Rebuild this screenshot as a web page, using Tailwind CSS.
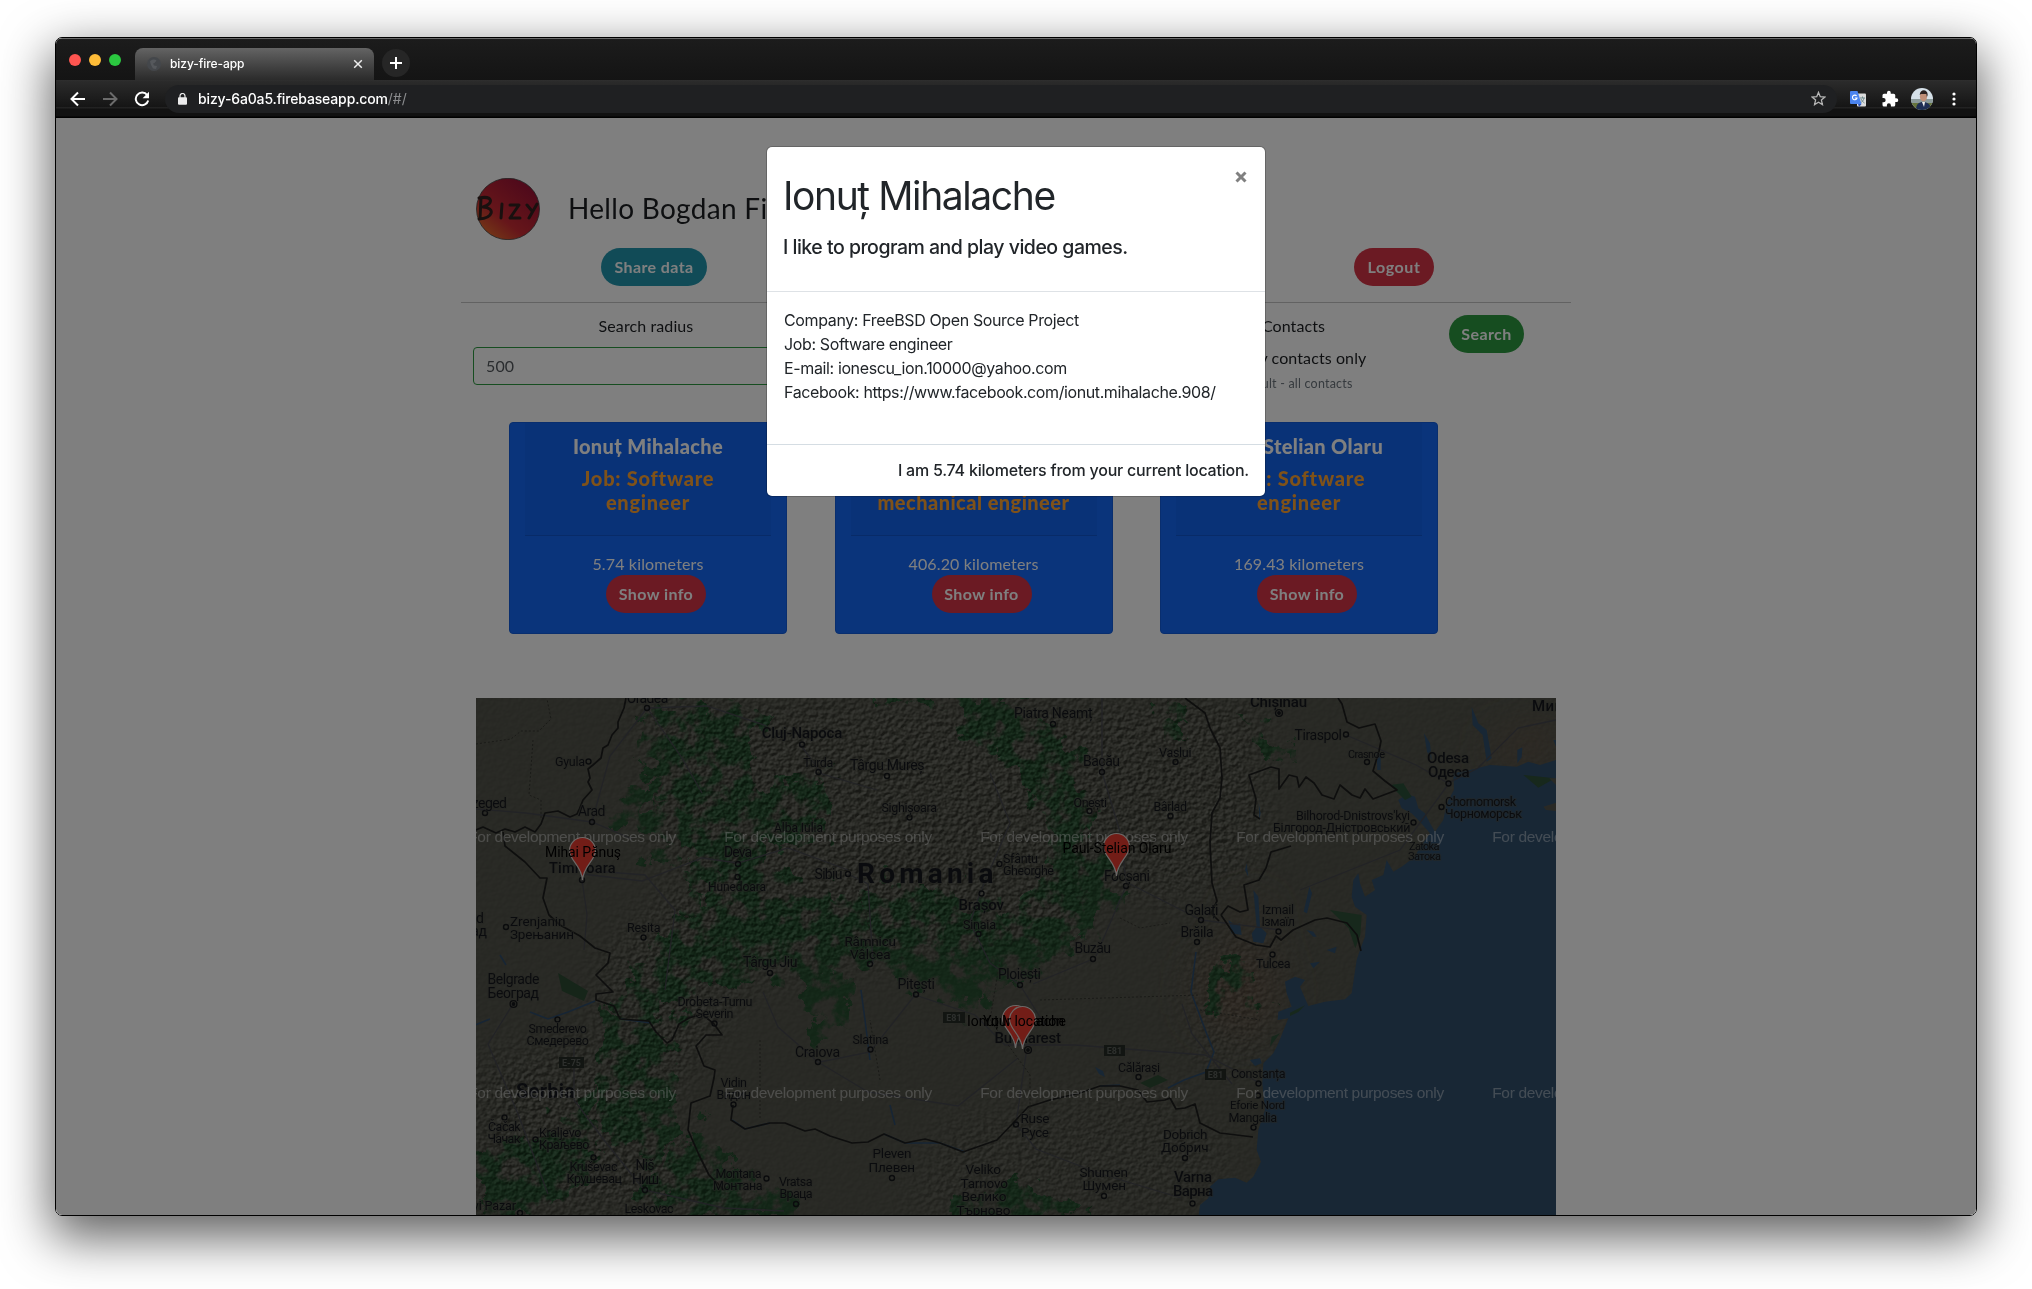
<!DOCTYPE html>
<html lang="en">
<head>
<meta charset="utf-8">
<title>bizy-fire-app</title>
<script src="https://cdn.jsdelivr.net/npm/@tailwindcss/browser@4"></script>
</head>
<body class="bg-white w-[2032px] h-[1289px] overflow-hidden">
<div class="pt-[37px] pl-[55px]">
<div class="relative flex flex-col w-[1922px] h-[1179px] rounded-[7px] border border-black shadow-[0_18px_50px_4px_rgba(0,0,0,0.62)]">
<div class="flex flex-col flex-1 rounded-[6px] overflow-hidden">

  <!-- tab strip -->
  <div class="flex items-end h-[42px] bg-linear-to-b from-[#1c1c1c] to-[#141414] border-t border-[#6a6a6a] font-['Inter',sans-serif]">
    <div class="flex gap-2 self-center pl-[13px] pt-px w-[72px]">
      <span class="size-3 rounded-full bg-[#fe5550]"></span>
      <span class="size-3 rounded-full bg-[#febc38]"></span>
      <span class="size-3 rounded-full bg-[#2bc840]"></span>
    </div>
    <div class="flex items-center h-8 w-[239px] ml-[7px] pl-3 pr-[10px] rounded-t-lg bg-linear-to-b from-[#646464] to-[#2b2b2b]">
      <svg class="size-[14px]" viewBox="0 0 14 14"><circle cx="7" cy="7" r="7" fill="#44474b"/><path d="M3 4.500c2-2.500 5-2.500 6.500-1L7.500 6 6 6.500l1 2 3 .5-1 3-3-.5L4 8z" fill="#55585c"/></svg>
      <span class="ml-[9px] text-[12px] font-medium tracking-[-0.08px] text-white">bizy-fire-app</span>
      <svg class="ml-auto size-3" viewBox="0 0 12 12"><path d="M2.200 2.200l7.600 7.600M9.800 2.200l-7.600 7.600" stroke="#eee" stroke-width="1.500"/></svg>
    </div>
    <div class="flex items-center justify-center size-7 ml-[8px] mb-[3px] rounded-full bg-[#262626]">
      <svg class="size-3" viewBox="0 0 12 12"><path d="M6 0v12M0 6h12" stroke="#fff" stroke-width="2"/></svg>
    </div>
  </div>

  <!-- toolbar -->
  <div class="flex items-center h-[38px] pb-px bg-[linear-gradient(#303030_0px,#2b2b2b_1px,#151515_27px,#222_27px,#222_28px,#111_29px,#111_36px,#000_37px)] font-['Inter',sans-serif]">
    <div class="flex gap-[16px] pl-[14px] w-[109px]">
      <svg class="size-4" viewBox="0 0 16 16" fill="none" stroke="#fff" stroke-width="2"><path d="M15 8H2M8 1.500L1.500 8 8 14.500"/></svg>
      <svg class="size-4" viewBox="0 0 16 16" fill="none" stroke="#6b6b6b" stroke-width="2"><path d="M1 8h13M8 1.500L14.500 8 8 14.500"/></svg>
      <svg class="size-4" viewBox="0 0 16 16"><path d="M13.200 4.200A6.300 6.300 0 1 0 14.200 9.500" fill="none" stroke="#fff" stroke-width="2"/><path d="M15 .8v6.400H8.600z" fill="#fff"/></svg>
    </div>
    <div class="flex items-center h-7 w-[1672px] rounded-full bg-[#1f2022] pl-[13px] pr-[11px]">
      <svg class="w-[9px] h-[12px]" viewBox="0 0 9 12"><rect y="4.200" width="9" height="7.600" rx="1" fill="#ececec"/><path d="M2 5V3a2.500 2.500 0 0 1 5 0v2" fill="none" stroke="#ececec" stroke-width="1.200"/></svg>
      <span class="ml-[11px] text-[14px] font-medium tracking-[-0.15px] text-white">bizy-6a0a5.firebaseapp.com</span><span class="text-[14px] text-[#8b8c8e]">/#/</span>
      <svg class="ml-auto size-[15px]" viewBox="0 0 16 16"><path d="M8 1.500l1.900 4.600 4.900.4-3.700 3.200 1.100 4.800L8 12l-4.200 2.500 1.100-4.800L1.200 6.500l4.900-.4z" fill="none" stroke="#b5b5b5" stroke-width="1.400"/></svg>
    </div>
    <svg class="ml-[13px] size-4" viewBox="0 0 16 16"><rect x="7" y="2.500" width="9" height="13" rx="1" fill="#dcdcdc"/><path d="M10 7h5M12.500 5.500V7M14 7c-.5 2.500-2 4-3.500 5M11 8c1 2 2 3 3.500 4" stroke="#6f8b8f" fill="none"/><path d="M1 0h6.500l4 13H1a1 1 0 0 1-1-1V1a1 1 0 0 1 1-1z" fill="#4a83ee"/><path d="M9 16l-1-3h3.500z" fill="#2f50b0"/><path d="M6.600 5A2.300 2.300 0 1 0 7 7H4.800" fill="none" stroke="#fff" stroke-width="1.100"/></svg>
    <svg class="ml-[15px] size-[18px]" viewBox="0 0 24 24" fill="#fff"><path d="M20.500 11H19V7a2 2 0 0 0-2-2h-4V3.500a2.500 2.500 0 0 0-5 0V5H4a2 2 0 0 0-2 2v3.800h1.500a2.700 2.700 0 0 1 0 5.400H2V20a2 2 0 0 0 2 2h3.800v-1.500a2.700 2.700 0 0 1 5.400 0V22H17a2 2 0 0 0 2-2v-4h1.500a2.500 2.500 0 0 0 0-5z"/></svg>
    <svg class="ml-[12px] size-[22px] rounded-full" viewBox="0 0 22 22"><rect width="22" height="22" fill="#d5e0e8"/><rect y="11" width="22" height="4" fill="#8b9a9a"/><rect y="15" width="22" height="7" fill="#66743c"/><path d="M5 22c0-6 3-8 7-8s8 2 8 8z" fill="#1f2f55"/><path d="M11 14l2 5 1-5z" fill="#eee"/><ellipse cx="12.500" cy="8.500" rx="3.600" ry="5" fill="#c08f78"/><path d="M8.700 7c0-6 8-6.500 8 0l-.8 2-.6-3H10z" fill="#2b2120"/></svg>
    <svg class="ml-[19px] w-1 h-4" viewBox="0 0 4 16" fill="#fff"><circle cx="2" cy="3" r="1.600"/><circle cx="2" cy="8" r="1.600"/><circle cx="2" cy="13" r="1.600"/></svg>
  </div>

  <!-- page -->
  <div class="relative flex-1 overflow-hidden bg-white font-['Lato',sans-serif] text-[#1c1f22]">
    <div class="w-[1110px] mx-auto pt-[60px]">
      <div class="flex items-center h-[62px] pl-[15px]">
        <svg class="w-[64px] h-[62px]" viewBox="0 0 64 62">
          <defs><linearGradient id="lg" x1="0" y1="1" x2=".75" y2=".1"><stop offset="0" stop-color="#f48a2a"/><stop offset=".45" stop-color="#cc2c34"/><stop offset="1" stop-color="#a01436"/></linearGradient></defs>
          <ellipse cx="32" cy="31" rx="31.500" ry="30.700" fill="url(#lg)" stroke="#444" stroke-width=".8"/>
          <g fill="none" stroke="#33211f" stroke-width="3" stroke-linecap="round" stroke-linejoin="round"><path d="M5 20L4 41M3 20c14-3 15 6 4 9 13 1 10 11-4 12M26 26l-1 14M34 27h9l-9 13h10M51 27l5 6M61 26l-8 14"/></g>
        </svg>
        <h1 class="ml-[28px] pb-0.5 text-[28px] tracking-[0.3px] whitespace-nowrap">Hello Bogdan Filip</h1>
      </div>
      <div class="grid grid-cols-3 mt-2 pb-4 border-b border-[#c4c4c4] justify-items-center text-white font-bold text-[16px]">
        <button class="ml-4 w-[106px] h-[38px] pb-px rounded-[19px] bg-[#2296ae] tracking-[0.4px]">Share data</button>
        <span></span>
        <button class="ml-4 w-[80px] h-[38px] pb-px rounded-[19px] bg-[#d63446] tracking-[0.6px]">Logout</button>
      </div>
      <div class="grid grid-cols-[370px_370px_185px_185px] h-[119px] pt-[11px] text-center text-[16px] leading-6 tracking-[0.1px]">
        <div class="px-3">Search radius
          <div class="flex items-center mt-[9px] h-[38px] pb-px border border-[#2c9a40] rounded-[4px] px-3 text-[#54595e]">500</div>
        </div>
        <div></div>
        <div class="whitespace-nowrap">Contacts
          <div class="mt-2 flex justify-center pl-6">My contacts only</div>
          <div class="mt-0.5 text-[12.500px] text-[#6c757d] tracking-[0.2px]">Default - all contacts</div>
        </div>
        <div><button class="mt-px ml-4 w-[75px] h-[38px] pb-px rounded-[19px] bg-[#2c9a40] text-white font-bold tracking-[0.4px]">Search</button></div>
      </div>

      <div class="flex gap-[47.500px] pl-12 text-center text-white">
        <article class="w-[278px] h-[212px] rounded-[4px] bg-[#1468f6] border border-[#125ddd] px-[15px]">
          <header class="h-[113px] pt-[11px] bg-black/3 border-b border-black/12 text-[20px] leading-6 font-black tracking-[0.35px]">
            <h5>Ionuț Mihalache</h5><p class="mt-2 text-[#ffa432] tracking-[0.75px]">Job: Software<br>engineer</p>
          </header>
          <p class="pt-4 text-[16px] leading-6 tracking-[0.15px]">5.74 kilometers</p>
          <button class="block ml-[81px] -mt-px w-[100px] h-[38px] pb-px rounded-[19px] bg-[#d63446] font-bold tracking-[0.4px]">Show info</button>
        </article>
        <article class="w-[278px] h-[212px] rounded-[4px] bg-[#1468f6] border border-[#125ddd] px-[15px]">
          <header class="h-[113px] pt-[11px] bg-black/3 border-b border-black/12 text-[20px] leading-6 font-black tracking-[0.35px]">
            <h5>Mihai Pănuș</h5><p class="mt-2 text-[#ffa432] tracking-[0.45px]">Job: Senior<br>mechanical engineer</p>
          </header>
          <p class="pt-4 text-[16px] leading-6 tracking-[0.15px]">406.20 kilometers</p>
          <button class="block ml-[81px] -mt-px w-[100px] h-[38px] pb-px rounded-[19px] bg-[#d63446] font-bold tracking-[0.4px]">Show info</button>
        </article>
        <article class="w-[278px] h-[212px] rounded-[4px] bg-[#1468f6] border border-[#125ddd] px-[15px]">
          <header class="h-[113px] pt-[11px] bg-black/3 border-b border-black/12 text-[20px] leading-6 font-black tracking-[0.35px]">
            <h5>Paul-Stelian Olaru</h5><p class="mt-2 text-[#ffa432] tracking-[0.75px]">Job: Software<br>engineer</p>
          </header>
          <p class="pt-4 text-[16px] leading-6 tracking-[0.15px]">169.43 kilometers</p>
          <button class="block ml-[81px] -mt-px w-[100px] h-[38px] pb-px rounded-[19px] bg-[#d63446] font-bold tracking-[0.4px]">Show info</button>
        </article>
      </div>

      <svg id="map" class="block mt-16 mx-auto w-[1080px] h-[520px]" viewBox="476 698 1080 520" font-family="Roboto, sans-serif">
        <defs>
          <filter id="forest" x="-5%" y="-5%" width="110%" height="110%" color-interpolation-filters="sRGB">
            <feTurbulence type="fractalNoise" baseFrequency=".04" numOctaves="5" seed="4" result="n"/>
            <feDisplacementMap in="SourceGraphic" in2="n" scale="60" xChannelSelector="R" yChannelSelector="G" result="d"/>
            <feTurbulence type="fractalNoise" baseFrequency=".05" numOctaves="5" seed="9"/>
            <feColorMatrix values="0 0 0 0 0  0 0 0 0 0  0 0 0 0 0  0 6 0 0 -2.200" result="m"/>
            <feComposite in="d" in2="m" operator="in"/><feGaussianBlur stdDeviation=".6"/>
          </filter>
          <filter id="relief" x="0" y="0" width="100%" height="100%" color-interpolation-filters="sRGB">
            <feTurbulence type="fractalNoise" baseFrequency=".2 .24" numOctaves="4" seed="21"/>
            <feColorMatrix values="0 0 0 0 0  0 0 0 0 0  0 0 0 0 0  1 0 0 0 0"/>
            <feDiffuseLighting surfaceScale="2.500" lighting-color="#fff"><feDistantLight azimuth="225" elevation="31"/></feDiffuseLighting>
          </filter>
          <filter id="soft"><feGaussianBlur stdDeviation="20"/></filter>
          <mask id="hills"><rect x="476" y="698" width="1080" height="520" fill="#1c1c1c"/><g filter="url(#soft)" fill="#fff">
            <path d="M640 698H1260V860L1180 900 1090 880 1080 950 860 960 740 980 690 1060 660 1130 780 1215H476V1060L600 1040 610 950 690 880 640 820 660 770z"/><path d="M1190 930l90 20-20 110-60 20zM950 1120l200-30 90 60-60 65H900z" opacity=".6"/></g></mask>
        </defs>
        <rect x="476" y="698" width="1080" height="520" fill="#52534a"/>
        <path d="M1200 960l70-10 15 50-40 40-50-30zM1490 740l66-20v40l-60 8zM1230 910l30-10 10 30-30 10z" fill="#5f5246" filter="url(#soft)"/>
        <g fill="#284e30" filter="url(#forest)">
          <path d="M640 715l60-12 70 10-20 30 10 40 50-10 20 40-60 30-20 40-50-30-5-40-50-30z"/>
          <path d="M740 790l90-30 10 60-60 30zM860 698h160l50 40 20 70 20 50 20 40-50 30-10 30-70 30-110-5-10-60 110-20 60-30-10-60-30-50-70-50z"/>
          <path d="M680 915l170-30 110 0 10 70-180 15-100 20-50 50-30-40z"/>
          <path d="M690 870l60-10 60 30-20 30-90-10zM610 800l90-10 30 30-20 40-80-20zM610 1015l70 10-5 60 5 40-30 40-40-30-20-60z"/>
          <path d="M476 1130l60 10 40-20 10 60-40 40h-70zM560 1120l30-30 10 60-30 20zM690 1120l40 40 70 40v20h-100l-60-20zM950 1200l80-15 60 25-20 15-120-5z"/>
          <path d="M1220 965l35 5 15 40-20 5-35-20zM780 960l60 10 20 60-30 10-30-40zM900 960l60 0 30 40-30 20zM1160 698l30 5 0 30-20 0zM1240 710l40 30 10 30-20-5z"/>
        </g>
        <g mask="url(#hills)" style="mix-blend-mode:soft-light" opacity=".6"><rect x="476" y="698" width="1080" height="520" filter="url(#relief)"/></g>

        <g transform="translate(1180 690) scale(.33333)" fill="#304e6b">
          <path d="M1128 210l-48 15-35-10-35 15-80-5-60 15-50 10 2 50-22 40-10 50-25 35-15-25-15-30-20-15-10-35-25-8-25 18 10 25 30 15 25 25 30 35-35 50-10 20-40 30-25 15-20-35-10 45-35 15 10 30-30 20-15-40-5-30-15 20-5 50 10 30 35 25-5 65-15 40-10 30-15 100-20 18-60 7-50 13-25-58 15-20-30-10-30 15 5 35 15 40-40 15-2 25 32-5-30 75-15 30-30 30-3 60 8 80-20 60-5 60 13 35-23 45-20 18-35-15-50 5-25 22-5 35-25 20-5 40H1128z"/>
          <path d="M875 50l20 50 25 20 15 85-15 10-12-80-30-30zM732 130l18 30 5 50-14-25zM1012 220l0-40 15-8-2 30zM590 190l12 0v50h-10zM220 600l15 20 5 90 20 20-10 30-30-5-5-25 15-20zM145 690l20 15 15-5 5 35-30-5zM388 590l8 20-15 60-10-5zM236 340l6 30-4 20zM380 720l20 5 10 15-10 0zM440 780l30-10-5 20zM390 820l30-5-20 20zM210 1110l30-5 5 15-20 8zM1120 150h8v20zM205 560l-10-20 5-20z"/>
          <path d="M1030 255l95 10-50 28z" fill="#2f5038"/><path d="M450 660l95 15-4 60-15 40-20-60-20-20z" fill="#2f5038"/><path d="M1090 350l38-12v25l-30-3z" fill="#53534b"/><path d="M1108 265h20v20z" fill="#53534b"/><path d="M330 968l45-22-20 20-25 12z" fill="#2f5038"/><path d="M300 1030l-30 40 5-30z" fill="#2f5038"/><path d="M630 285l40-5 25 40-20 10z" fill="#2b5038"/>
        </g>
        <g fill="none" stroke="#2e4b69" stroke-width="1.600"><path d="M530 1012l18 7 20-7 27-11M621 1019l30 4M732 1120l13 9 25-6M884 1134l21 9 35 0 25 9M1100 1086l20-1"/><path d="M1196 952l-5 40 15 40 8 20-8 20-22 8-16 8"/><path d="M861 990l4 30 5 40M890 1105l5 20"/><path d="M470 1027l20-8M500 955l6 10" /></g>
        <path d="M558 973l30 18-4 10-22-10z" fill="#2d4a33"/><path d="M1140 1083l18-8 10 5-18 8z" fill="#2d4a33"/><path d="M1095 1067l8 4 2 6-6-3z" fill="#304e6b"/>

        <g fill="none" stroke="#45464c" stroke-width="1.300">
          <path d="M476 809l50 4 66 9 40 17M592 822l18-66 37-48 60-2 60 20M647 708l35 50 20 35M582 880l5 35-3 35M582 874l60 7 60-23 36 5 50-15 60 22M665 990l10-80-30-35-63-5"/>
          <path d="M800 744l22 30 55 16M848 874l20 10 5 80M820 1062l50-10 45-57 60 20 30 30 70 0 130 10 55 28M1020 985l25 40M1093 959l-60 25M1126 886l-30 70M1102 772l18 60 6 50M1102 698l0 74M818 1062l-40-35-15-35M980 893l-10 30 20 40 30 22M980 893l30-70-20-50"/>
          <path d="M513 1004l-25 40 30 70 30 80M574 1040l0 60 30 40 40 50 80 18 60 3M1016 1124l10-70M1016 1124l20 25 65 25 80 24M818 1062l50 30 90 14 60-48M1232 1084l-40-50-10-30 M1300 890l100-40 50-68M1346 735l70 30 32 18 30-15 40-40 38-8M1126 882l75 38M1201 920l80 10"/>
        </g>
        <g fill="none" stroke="#1c1d1c" stroke-width="1.700" stroke-linejoin="round">
          <path d="M626 698l-2 10-6 14 0 6-6 7-4 10-5 3-2 10-8 7-5 4 2 9-2 4 4 8-9 10-4 10-2 4-7 3-12-6-13 2-4 11-6 8-10-5-10 5-10-3-9 4-13-6-7 3M503 832l2 14 20 16 15 16 7 0-4 20 6 17 11 10 20 11 15 12 15 5-2 10-12 12 17 17-17 2v6l18 6 6 13 29 2 7 11 11 11 5-3 7-16 10-6 13-4 12 10 8 11-16 0-7 8-3 3 8 20 11 4-1 8-4 18-19 7-3 27 11 25 10 20 15 15"/>
          <path d="M733 1105l-2 15 14 9 25-6h15l20 8 10-2 15 7 22 7 16-1 16-8 21 9 20-4 15 4 23 9 34-12 19-20 12-13 22-7 30-7 20-7h20l18 4 9 12 18-2 5-2 6 11 9-1 10-4 5 19 20 10 33 4"/>
          <path d="M1185 698l20 15 5 15 10 20 2 30-2 20-8 15-2 30 2 40 5 18-6 12 8 8M1221 915l15 22 20 8 14 2 6-11 5 4 12-10 22-10 12-2 20 5 10 12 4 16M1221 915l7-9 12 6 8-2-4-25 15-5 7-12 5-16 20-6"/>
          <path d="M1338 698l4 6 5 18 12 6 16-4 6 17-2 10-6 20 12 10 12 9-24 9-8-10-5 9-8-3-12-10-6 14-12-4-8-12-8-6-7 10-2-10-8-2-10 14 0-20-8-2-22 8 7 24-2 16 6 4"/>
        </g>
        <g fill="none" stroke="#34352f" stroke-width="1" stroke-dasharray="2 2"><path d="M476 744l35-5 10-8 18 0 12-12-4-20M533 740l-4 55 12 5 0 18M870 930l-12-40M1000 960l-10 60 40 55 0 60M760 1040l0 80M880 1080l-10-60M1120 918l20 10 30-5M1040 1000l160-5M1200 1010l60 10"/></g>

        <g font-size="9" font-weight="700" fill="#5b5f5a" text-anchor="middle">
          <g fill="#252b25"><rect x="559" y="1057" width="25" height="11"/><rect x="943" y="1012" width="22" height="11"/><rect x="1104" y="1045" width="21" height="11"/><rect x="1205" y="1069" width="21" height="11"/></g>
          <text x="571.500" y="1066">E-75</text><text x="954" y="1021">E81</text><text x="1114.500" y="1054">E81</text><text x="1215.500" y="1078">E81</text>
        </g>
        <g id="dots" fill="none" stroke="#15171a" stroke-width="1.400"></g>
        <g id="labels" fill="#15171c" stroke="#4c4d46" stroke-opacity=".5" stroke-width="2" stroke-linejoin="round" paint-order="stroke"></g>
        <g fill="#fff" fill-opacity=".42" font-family="Liberation Sans, Arial, sans-serif" font-size="15.500">
          <text x="468.200" y="842" textLength="208">For development purposes only</text><text x="724.200" y="842" textLength="208">For development purposes only</text><text x="980.200" y="842" textLength="208">For development purposes only</text><text x="1236.200" y="842" textLength="208">For development purposes only</text><text x="1492.200" y="842" textLength="208">For development purposes only</text>
          <text x="468.200" y="1098" textLength="208">For development purposes only</text><text x="724.200" y="1098" textLength="208">For development purposes only</text><text x="980.200" y="1098" textLength="208">For development purposes only</text><text x="1236.200" y="1098" textLength="208">For development purposes only</text><text x="1492.200" y="1098" textLength="208">For development purposes only</text>
        </g>
        <defs><path id="pin" d="M0 42.500C-1 28-13 23-13 13A13 13 0 0 1 13 13C13 23 1 28 0 42.500z" fill="#e53a2e" stroke="#d8d0cc" stroke-width="1.200"/></defs>
        <use href="#pin" x="582.500" y="837.500"/><use href="#pin" x="1116.500" y="833.500"/><use href="#pin" x="1015.500" y="1005.500"/>
        <text x="967" y="1025.500" font-size="14" textLength="99">Ionuț Mihalache</text>
        <use href="#pin" x="1022.500" y="1006.500"/>
        <g font-size="14" fill="#000"><text x="545" y="857" textLength="76">Mihai Pănuş</text><text x="1062.500" y="853" textLength="109">Paul-Stelian Olaru</text><text x="983" y="1026" textLength="81">Your location</text></g>
      </svg>
    </div>
    <div class="absolute inset-0 bg-black/50"></div>

    <!-- contact dialog -->
    <div role="dialog" class="absolute left-[711px] top-[29px] w-[498px] h-[349px] rounded-[5px] bg-white ring-1 ring-black/20 font-['Inter',sans-serif] text-[16px] leading-6 text-[#212529] whitespace-nowrap tracking-[-0.37px]">
      <div class="relative h-[145px] px-4 pt-[25px] border-b border-[#dee2e6]">
        <h2 class="text-[39px] leading-[48px] tracking-[-1.4px]">Ionuț Mihalache</h2>
        <h5 class="mt-[15px] text-[19.500px] font-medium tracking-[-0.5px]">I like to program and play video games.</h5>
        <svg class="absolute right-[18px] top-[24px] size-3" viewBox="0 0 12 12"><path d="M1.500 1.500l9 9M10.500 1.500l-9 9" stroke="#808080" stroke-width="3"/></svg>
      </div>
      <div class="h-[153px] px-[17px] pt-4 border-b border-[#d5dde3]">
        <p>Company: FreeBSD Open Source Project</p>
        <p>Job: Software engineer</p>
        <p>E-mail: ionescu_ion.10000@yahoo.com</p>
        <p class="tracking-[-0.4px]">Facebook: https://www.facebook.com/ionut.mihalache.908/</p>
      </div>
      <p class="pt-[13px] pr-4 text-right font-medium tracking-[-0.22px]">I am 5.74 kilometers from your current location.</p>
    </div>
  </div>
</div>
</div>
</div>
<script>
// text, left, right, baseline, size, weight
const places = [
['Oradea',626.7,668.3,703,14,400],['Cluj-Napoca',761.7,842.3,738,15,500],['Gyula',555,585,765.5,12.5,400],['Turda',803.3,833.3,767,12.5,400],['Szeged',464,507,808,14,400],['Arad',578,605.5,816,14,400],['Alba Iulia',774,823,832,12,400],['Deva',724,752,857,14,400],['Hunedoara',708,766,891,12,400],['Sibiu',814.5,842.5,879,14,400],['Timișoara',549,615.5,873,14.5,500],['Novi Sad',430,484,923,14,400],['Нови Сад',427,487,936,14,400],['Zrenjanin',510,565.5,925.5,13.5,400],['Зрењанин',510,574,939,13.5,400],['Resita',627,660.5,932,12.5,400],
['Piatra Neamț',1014,1092.5,718,14,400],['Târgu Mureș',850,924.5,770,14,400],['Bacău',1083,1120,766,14,400],['Vaslui',1159,1191.5,757,12.5,400],['Onești',1073.5,1107,806.5,12.5,400],['Bârlad',1153.5,1187,811,12.5,400],['Sighișoara',881.5,937,812,12.5,400],['Sfântu',1003,1038,863,12.5,400],['Gheorghe',1003,1054,875,12.5,400],['Focșani',1104,1150,881,14,400],['Romania',857,993.5,883,28,700],['Brașov',958.5,1004,910,15,500],['Sinaia',963,996,928.5,12.5,400],['Galați',1184.5,1218.5,915,14,400],['Brăila',1180.5,1213.5,937,14,400],['Buzău',1074.5,1111,953,14,400],['Râmnicu',844.5,896,945.5,13.5,400],['Vâlcea',850,890.5,958.5,13.5,400],
['Chișinău',1250,1307,706.5,15,500],['Tiraspol',1294.5,1342,740,14,400],['Crasnoe',1348,1385,757.5,11,400],['Odesa',1427,1469,763,15,500],['Одеса',1428,1469.5,777,15,500],['Chornomorsk',1445,1516,806,12.5,400],['Чорноморськ',1445,1522,818,12.5,400],["Bilhorod-Dnistrovs'kyi",1296,1410,820,12.5,400],['Білгород-Дністровський',1273,1410.5,832,12.5,400],['Zatoka',1409,1439.5,850,11,400],['Затока',1408,1441,860,11,400],['Izmail',1262,1294,914,12.5,400],['Ізмаїл',1261.5,1295,926,12.5,400],['Миколаїв',1532,1602,711,15,500],['Tulcea',1256,1290.5,968,12.5,400],
['Târgu Jiu',743,797.5,967,14,400],['Belgrade',487.5,539.5,984,14,400],['Београд',487.5,539,998,14,400],['Drobeta-Turnu',677.5,752.5,1006,12.5,400],['Severin',695.5,733.5,1018,12.5,400],['Smederevo',528.5,587,1033,12.5,400],['Смедерево',526.5,589,1045,12.5,400],['Craiova',795,840,1057,14,400],['Slatina',852.5,888.5,1044,12.5,400],['Vidin',720.5,747,1087,12.5,400],['Видин',716.5,751,1099,12.5,400],['Serbia',516,575,1098,20,700],['Čačak',488,520.5,1131,12.5,400],['Чачак',487.5,520.5,1143,12.5,400],['Kraljevo',539,581.5,1137,12.5,400],['Краљево',539,589.5,1149,12.5,400],['Kruševac',569.5,617.5,1171,12.5,400],['Крушевац',566.5,622,1183,12.5,400],['Niš',635.5,654.5,1170,14,400],['Ниш',632,659,1184,14,400],['Montana',715.5,761.5,1177.5,12.5,400],['Монтана',713,762.5,1189.5,12.5,400],['Vratsa',779,812.5,1186,12.5,400],['Враца',779.5,812.5,1198,12.5,400],['Novi Pazar',457,516,1210,12.5,400],['Leskovac',624.5,673.5,1213,12.5,400],
['Ploiești',998,1041,979,14,400],['Pitești',897.5,935,988.5,14,400],['Bucharest',994.5,1061,1043,15,500],['Călărași',1118,1160,1072,12.5,400],['Constanța',1231,1285.5,1078,12.5,400],['Eforie Nord',1230,1285,1109,11.5,400],['Mangalia',1228.5,1277,1122,12.5,400],['Ruse',1020.5,1049.5,1123,13.5,400],['Русе',1021,1049,1137,13.5,400],['Dobrich',1163,1207.5,1139,13.5,400],['Добрич',1161,1208.5,1152,13.5,400],['Varna',1174,1212,1182,15,500],['Варна',1173,1213,1196,15,500],['Shumen',1079.5,1128,1177,13.5,400],['Шумен',1082.5,1126,1190,13.5,400],['Pleven',872.5,911.5,1158,13.5,400],['Плевен',868.5,915,1172,13.5,400],['Veliko',965.5,1001,1174,13.5,400],['Tarnovo',960.5,1008,1188,13.5,400],['Велико',961.5,1006.5,1201,13.5,400],['Търново',956.5,1010.5,1215,13.5,400]];
// x, y, capital
const towns = [[647,708],[802,744.5],[588.5,761.5],[818.5,772],[485,813],[592,822],[738,864],[737.5,877],[848,874],[582,880],[506,927],[643.5,937.5],[1053,724],[887,776],[1102,772],[1175.5,762],[1089.5,811],[1170.5,816],[909.5,817.5],[999.5,864],[1126,886],[981.5,893.5],[978.5,934],[1201,920],[1197,942],[1093,959],[870,964],[1279,713,1],[1346,734.5],[1367,762],[1448.5,783.5],[1441.5,807],[1413.5,822.5],[1278.5,931.5],[1272.5,954.5],[770,973],[513.5,1004,1],[714.5,1023.5],[557.5,1019.5],[818,1062],[870.5,1049.5],[733.5,1104.5],[504.5,1117.5],[535.5,1139.5],[593.5,1157.5],[645,1190],[766.5,1178.5],[796,1204],[520,1213],[1020,985],[916,994.5],[1028,1050,1],[1138.5,1077],[1258.5,1083.5],[1258,1095.5],[1253.5,1127.5],[1016,1124.5],[1185,1158],[1192.5,1203.5],[1104,1196],[892,1178]];
const NS = 'http://www.w3.org/2000/svg';
const add = (parent, tag, attrs, text) => {
  const e = document.createElementNS(NS, tag);
  for (const k in attrs) e.setAttribute(k, attrs[k]);
  if (text) e.textContent = text;
  document.getElementById(parent).append(e);
};
for (const [t, l, r, y, s, w] of places) add('labels', 'text', {x: l, y, 'font-size': s, 'font-weight': w, textLength: r - l}, t);
for (const [x, y, capital] of towns) {
  add('dots', 'circle', {cx: x, cy: y, r: capital ? 3.4 : 2.5});
  if (capital) add('dots', 'circle', {cx: x, cy: y, r: 1.2, fill: '#15171a'});
}
</script>
</body>
</html>
